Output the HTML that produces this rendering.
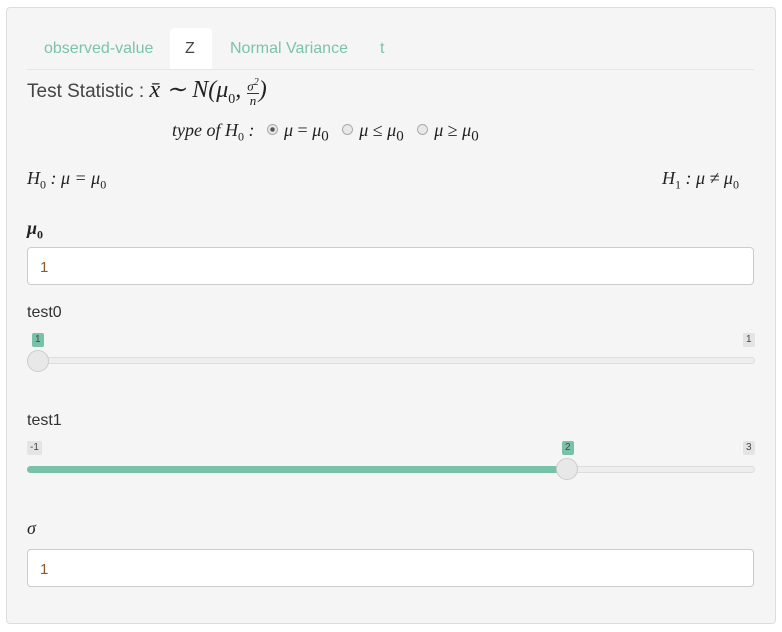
<!DOCTYPE html><html><head><style>
body{margin:0;background:#fff;font-family:"Liberation Sans",sans-serif;color:#333;}
.p{position:absolute;left:6px;top:7px;width:768px;height:615px;background:#f5f5f5;border:1px solid #ddd;border-radius:4px;}
.a{position:absolute;white-space:nowrap;}
.m{font-family:"Liberation Serif",serif;font-style:italic;font-weight:normal;color:#222;}
.tab{color:#7ac4aa;font-size:16px;top:40px;}
.inp{position:absolute;left:27px;width:727px;height:38px;background:#fff;border:1px solid #ccc;border-radius:4px;box-sizing:border-box;padding:11px 12px;font-size:15px;color:#8a5a2a;}
.badge{position:absolute;font-size:10px;padding:1px 3px;border-radius:2px;line-height:12px;}
.g{background:#77c2a9;color:#444;}.gr{background:#e4e4e4;color:#444;}
.track{position:absolute;left:27px;width:728px;height:7px;background:#eee;border:1px solid #ddd;border-radius:4px;box-sizing:border-box;}
.thumb{position:absolute;width:22px;height:22px;border-radius:50%;background:#e8e8e8;border:1px solid #ccc;box-sizing:border-box;}
.rad{display:inline-block;width:11px;height:11px;border-radius:50%;border:1px solid #aaa;background:#e8e8e8;vertical-align:1px;margin-right:6px;box-sizing:border-box;}
sub{font-style:normal;}
</style></head><body>
<div class="p"></div>
<div class="a" style="left:170px;top:28px;width:42px;height:42px;background:#fff;border-radius:4px 4px 0 0;"></div>
<div class="a" style="left:27px;top:69px;width:727px;height:1px;background:#e6e6e6"></div>
<div class="a tab" style="left:44px">observed-value</div>
<div class="a tab" style="left:185px;color:#444">Z</div>
<div class="a tab" style="left:230px">Normal Variance</div>
<div class="a tab" style="left:380px">t</div>
<div class="a" style="left:27px;top:75px;font-size:19px;color:#444">Test Statistic : <span class="m" style="font-size:24px">x̄ ∼ N(μ<sub style="font-size:14px">0</sub>, <span style="display:inline-block;vertical-align:middle;font-size:13px;text-align:center;line-height:13px">σ<sup style="font-size:10px">2</sup><br><span style="border-top:1px solid #333;display:block">n</span></span>)</span></div>
<div class="a m" style="left:172px;top:120px;font-size:18px">type of H<sub style="font-size:12px">0</sub> : <span style="font-style:normal;margin-left:8px"><span class="rad" style="background:radial-gradient(#555 30%,#e8e8e8 40%)"></span><i>μ</i> = <i>μ</i><sub>0</sub>&nbsp;&nbsp;&nbsp;<span class="rad"></span><i>μ</i> ≤ <i>μ</i><sub>0</sub>&nbsp;&nbsp;&nbsp;<span class="rad"></span><i>μ</i> ≥ <i>μ</i><sub>0</sub></span></div>
<div class="a m" style="left:27px;top:168px;font-size:18px">H<sub style="font-size:12px">0</sub> : μ = μ<sub style="font-size:12px">0</sub></div>
<div class="a m" style="left:662px;top:168px;font-size:18px">H<sub style="font-size:12px">1</sub> : μ ≠ μ<sub style="font-size:12px">0</sub></div>
<div class="a m" style="left:27px;top:218px;font-size:18px;font-weight:bold">μ<sub style="font-size:12px">0</sub></div>
<div class="inp" style="top:247px">1</div>
<div class="a" style="left:27px;top:304px;font-size:16px">test0</div>
<div class="badge g" style="left:32px;top:333px">1</div>
<div class="badge gr" style="left:743px;top:333px">1</div>
<div class="track" style="top:357px"></div>
<div class="thumb" style="left:27px;top:350px"></div>
<div class="a" style="left:27px;top:412px;font-size:16px">test1</div>
<div class="badge gr" style="left:27px;top:441px">-1</div>
<div class="badge g" style="left:562px;top:441px">2</div>
<div class="badge gr" style="left:743px;top:441px">3</div>
<div class="track" style="top:466px"></div>
<div class="a" style="left:27px;top:466px;width:540px;height:7px;background:#77c2a9;border-radius:4px"></div>
<div class="thumb" style="left:556px;top:458px"></div>
<div class="a m" style="left:27px;top:518px;font-size:18px">σ</div>
<div class="inp" style="top:549px">1</div>
</body></html>
